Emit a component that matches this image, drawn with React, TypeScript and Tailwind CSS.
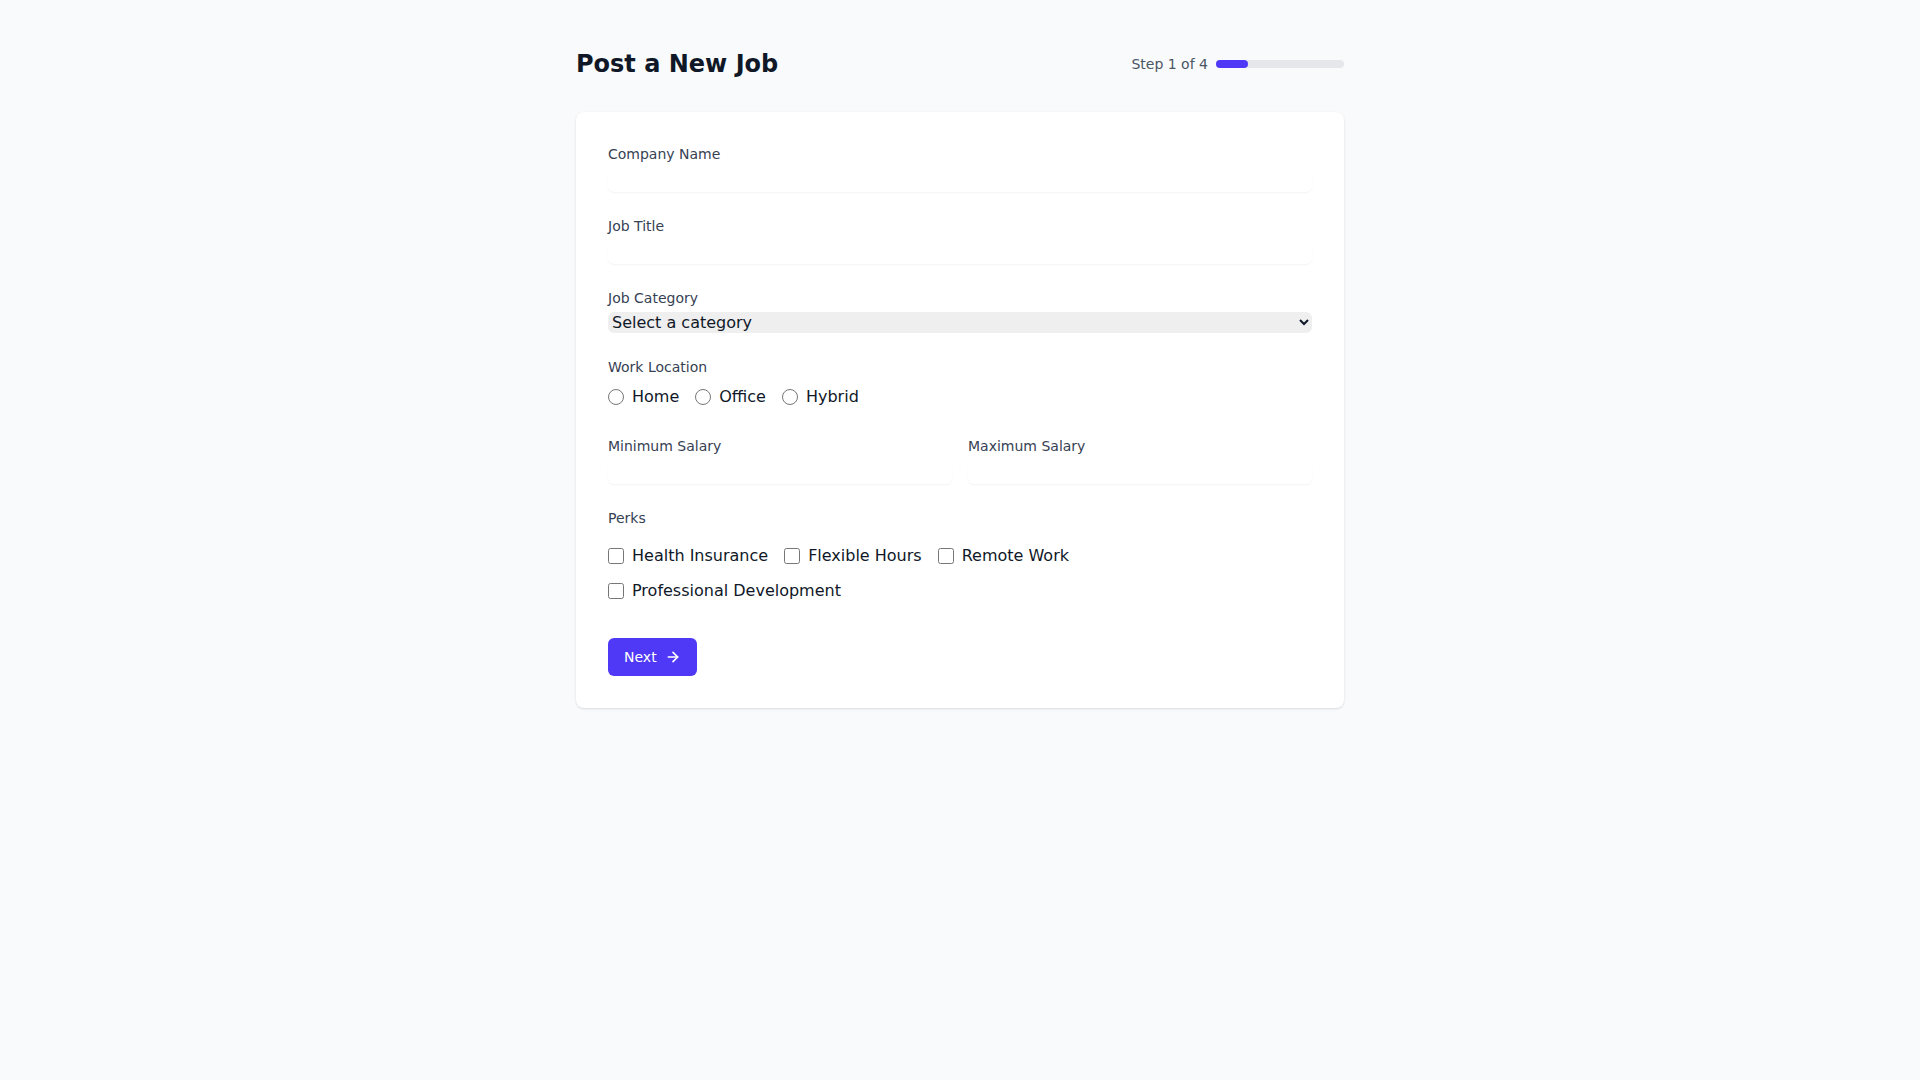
import React, { useState } from "react"
import { ArrowRight } from "lucide-react"

const perks = ["Health Insurance", "Flexible Hours", "Remote Work", "Professional Development"]
const locations = ["Home", "Office", "Hybrid"]

export default function App() {
  const [step] = useState(1)
  const totalSteps = 4

  return (
    <div className="min-h-screen bg-gray-50 font-['DejaVu_Sans',sans-serif] text-gray-900">
      <div className="mx-auto max-w-3xl pt-12 pb-12">
        {/* Header */}
        <div className="flex items-center justify-between">
          <h1 className="text-2xl font-bold text-gray-900">Post a New Job</h1>
          <div className="flex items-center gap-2">
            <span className="text-sm text-gray-600">
              Step {step} of {totalSteps}
            </span>
            <div className="h-2 w-32 rounded-full bg-gray-200">
              <div
                className="h-2 rounded-full bg-indigo-600"
                style={{ width: `${(step / totalSteps) * 100}%` }}
              />
            </div>
          </div>
        </div>

        {/* Form card */}
        <form className="mt-8 rounded-lg bg-white p-8 shadow-sm" onSubmit={(e) => e.preventDefault()}>
          <div>
            <label className="block text-sm text-gray-700">Company Name</label>
            <input type="text" className="mt-2 block h-5 w-full rounded-md text-sm shadow-xs outline-none" />
          </div>

          <div className="mt-6">
            <label className="block text-sm text-gray-700">Job Title</label>
            <input type="text" className="mt-2 block h-5 w-full rounded-md text-sm shadow-xs outline-none" />
          </div>

          <div className="mt-6">
            <label className="block text-sm text-gray-700">Job Category</label>
            <select className="mt-1 block w-full rounded-md bg-[#efefef] text-base">
              <option>Select a category</option>
              <option>Engineering</option>
              <option>Design</option>
              <option>Marketing</option>
              <option>Sales</option>
            </select>
          </div>

          <div className="mt-6">
            <label className="block text-sm text-gray-700">Work Location</label>
            <div className="mt-2 flex gap-4">
              {locations.map((loc) => (
                <label key={loc} className="flex h-6 items-center">
                  <input type="radio" name="location" className="h-4 w-4" />
                  <span className="ml-2 text-base">{loc}</span>
                </label>
              ))}
            </div>
          </div>

          <div className="mt-[27px] grid grid-cols-2 gap-4">
            <div>
              <label className="block text-sm text-gray-700">Minimum Salary</label>
              <input type="number" className="mt-2 block h-5 w-full rounded-md text-sm shadow-xs outline-none" />
            </div>
            <div>
              <label className="block text-sm text-gray-700">Maximum Salary</label>
              <input type="number" className="mt-2 block h-5 w-full rounded-md text-sm shadow-xs outline-none" />
            </div>
          </div>

          <div className="mt-6">
            <label className="block text-sm text-gray-700">Perks</label>
            <div className="mt-4 flex flex-wrap gap-x-4 gap-y-[11px]">
              {perks.map((perk) => (
                <label key={perk} className="flex h-6 items-center">
                  <input type="checkbox" className="h-4 w-4" />
                  <span className="ml-2 text-base">{perk}</span>
                </label>
              ))}
            </div>
          </div>

          <div className="mt-[35px]">
            <button
              type="submit"
              className="flex items-center gap-2 rounded-md bg-indigo-600 px-4 py-[9px] text-sm text-white hover:bg-indigo-700"
            >
              Next
              <ArrowRight className="h-4 w-4" strokeWidth={2.5} />
            </button>
          </div>
        </form>
      </div>
    </div>
  )
}
